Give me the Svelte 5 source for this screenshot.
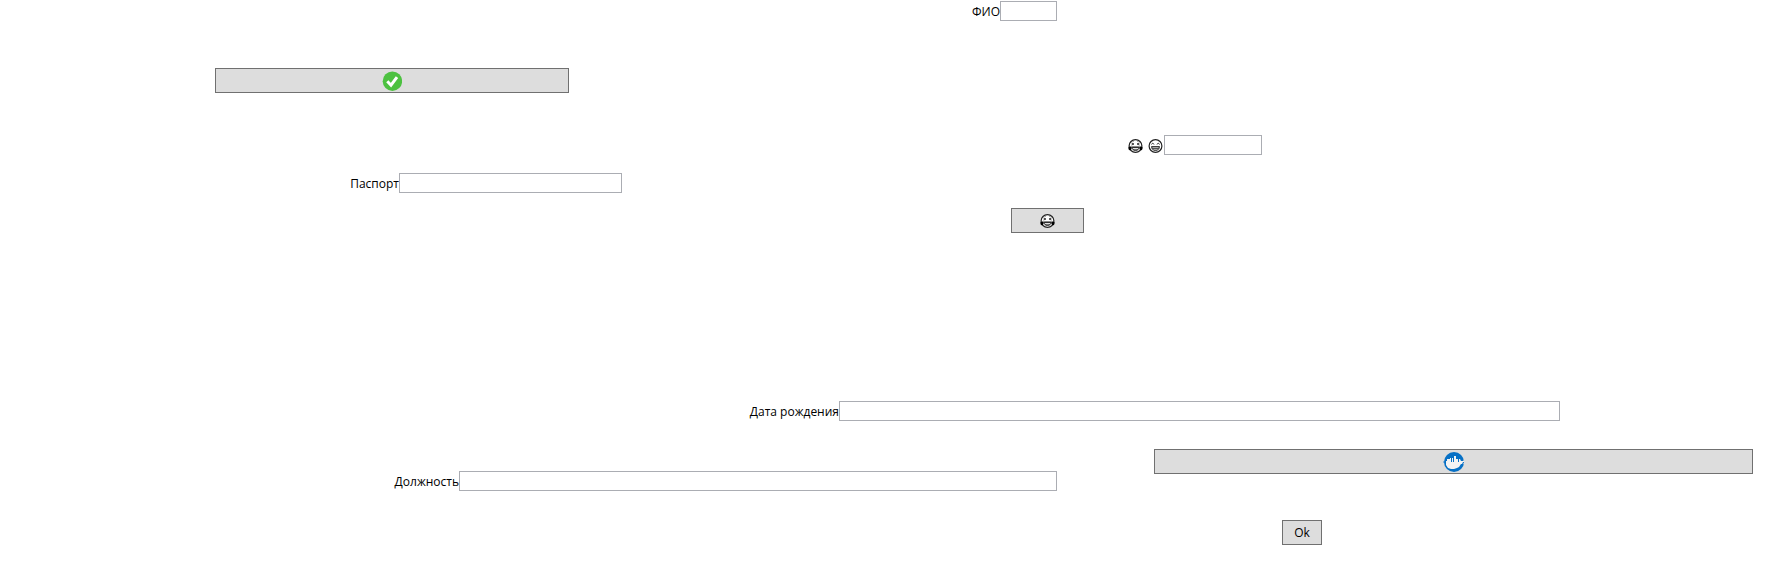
<script>
  let values = $state({ name: '', mood: '', passport: '', birth: '', position: '' });
</script>

{#snippet tearsFace()}
  <svg class="face" viewBox="0 0 15 14" aria-hidden="true">
    <circle cx="7.5" cy="7" r="6.4" fill="#fff" stroke="#222" stroke-width="1.2" />
    <path d="M3.500 4 6 5 3.500 6M11.500 4 9 5 11.500 6" fill="none" stroke="#222" stroke-width=".9" />
    <path d="M4.500 2.700 6 2.200M10.500 2.700 9 2.200" stroke="#777" stroke-width=".7" />
    <path d="M4 8h7c0 2.400-1.500 3.500-3.500 3.500S4 10.400 4 8z" fill="#777" stroke="#222" stroke-width=".9" />
    <path d="M4.500 8.300h6" stroke="#222" stroke-width=".9" />
    <path d="M5 9h5v1H5z" fill="#ddd" />
    <path d="M.5 8 3.500 7.200c.5 2-.1 4-1.700 4C.7 11.200.2 9.800.5 8zM14.500 8 11.500 7.200c-.5 2 .1 4 1.700 4 1.100 0 1.600-1.400 1.300-3.200z" fill="#000" />
  </svg>
{/snippet}

{#snippet grinFace()}
  <svg class="face" viewBox="0 0 15 14" aria-hidden="true">
    <circle cx="7.5" cy="7" r="6.4" fill="#fff" stroke="#222" stroke-width="1.2" />
    <path d="M3.500 5.500c.5-1.600 2-1.600 2.500 0M9 5.500c.5-1.600 2-1.600 2.500 0" fill="none" stroke="#222" stroke-width=".9" />
    <path d="M3.500 7.500h8c0 2.800-2 4-4 4s-4-1.200-4-4z" fill="#555" stroke="#222" stroke-width=".8" />
    <path d="M4.500 8.500h6M5.500 10.500h4" stroke="#ccc" stroke-width=".7" />
  </svg>
{/snippet}

<main>
  <div class="row name">
    <label for="name">ФИО</label>
    <input id="name" bind:value={values.name} />
  </div>

  <div class="row confirm">
    <button type="button" aria-label="✓">
      <svg class="logo" viewBox="0 0 20 20" aria-hidden="true">
        <circle cx="10.400" cy="10.200" r="9.700" fill="#4cc140" />
        <path d="m5.300 10.300 3.700 3.900L15 6.200" fill="none" stroke="#fff" stroke-width="3" />
      </svg>
    </button>
  </div>

  <div class="row mood">
    <label for="mood" aria-label="😂 😄">{@render tearsFace()}{@render grinFace()}</label>
    <input id="mood" bind:value={values.mood} />
  </div>

  <div class="row passport">
    <label for="passport">Паспорт</label>
    <input id="passport" bind:value={values.passport} />
  </div>

  <div class="row laugh">
    <button type="button" aria-label="😂">{@render tearsFace()}</button>
  </div>

  <div class="row birth">
    <label for="birth">Дата рождения</label>
    <input id="birth" bind:value={values.birth} />
  </div>

  <div class="row position">
    <label for="position">Должность</label>
    <input id="position" bind:value={values.position} />
    <button type="button" aria-label="Docker">
      <svg class="logo docker" viewBox="0 0 21 20" aria-hidden="true">
        <circle cx="11" cy="10" r="10" fill="#0670c5" />
        <path d="M3 9h1V7h3V6h1v4h1V6h1v4h1V4h2v3h2v3h1V7h1l1 2h3v1h-1l-1 2h-1l-2 3-2 1-3 1H8l-3-1-2-3z" fill="#f3f3f3" />
        <path d="M0 9h1v2H0zM20 8h1v1h-1zM20 11h1v1h-1z" fill="#8db5d6" />
      </svg>
    </button>
  </div>

  <div class="row ok">
    <button type="button">Ok</button>
  </div>
</main>

<style>
  :global(body) {
    margin: 0;
    background: #fff;
  }

  main {
    display: flex;
    flex-direction: column;
    padding: 1px 0 18px;
    color: #000;
    font: 12px/16px "Open Sans", "Noto Sans", sans-serif;
  }

  /* Each row divides the window width: lead space, control, remainder. */
  .row {
    display: grid;
    align-items: start;
  }

  .name {
    grid-template-columns: 1000fr 57fr 718fr;
  }

  .confirm {
    grid-template-columns: 215fr 354fr 1206fr;
    margin-top: 47px;
  }

  .mood {
    grid-template-columns: 1164fr 98fr 513fr;
    margin-top: 42px;
  }

  .passport {
    grid-template-columns: 399fr 223fr 1153fr;
    margin-top: 18px;
  }

  .laugh {
    grid-template-columns: 1011fr 73fr 691fr;
    margin-top: 15px;
  }

  .birth {
    grid-template-columns: 839fr 721fr 215fr;
    margin-top: 168px;
  }

  .position {
    grid-template-columns: 459fr 598fr 97fr 599fr 22fr;
    margin-top: 28px;
  }

  .position label,
  .position input {
    margin-top: 22px;
  }

  .ok {
    grid-template-columns: 1282fr 40fr 453fr;
    margin-top: 29px;
  }

  label {
    display: flex;
    gap: 5px;
    justify-self: end;
    padding-top: 3px;
    white-space: nowrap;
  }

  .mood label {
    padding: 4px 1px 0 0;
  }

  input,
  button {
    box-sizing: border-box;
    width: 100%;
    min-width: 0;
    margin: 0;
    border-radius: 0;
    color: inherit;
    font: inherit;
  }

  input {
    height: 20px;
    padding: 0 2px;
    border: 1px solid #abadb3;
    background: #fff;
  }

  button {
    display: flex;
    grid-column: 2;
    align-items: center;
    justify-content: center;
    height: 25px;
    padding: 0;
    border: 1px solid #707070;
    background: #ddd;
  }

  .position button {
    grid-column: 4;
  }

  input:focus,
  button:hover {
    border-color: #3c7fb1;
    outline: none;
  }

  .face {
    display: block;
    width: 15px;
    height: 14px;
  }

  .logo {
    display: block;
    width: 20px;
    height: 20px;
  }

  .docker {
    width: 21px;
  }
</style>
